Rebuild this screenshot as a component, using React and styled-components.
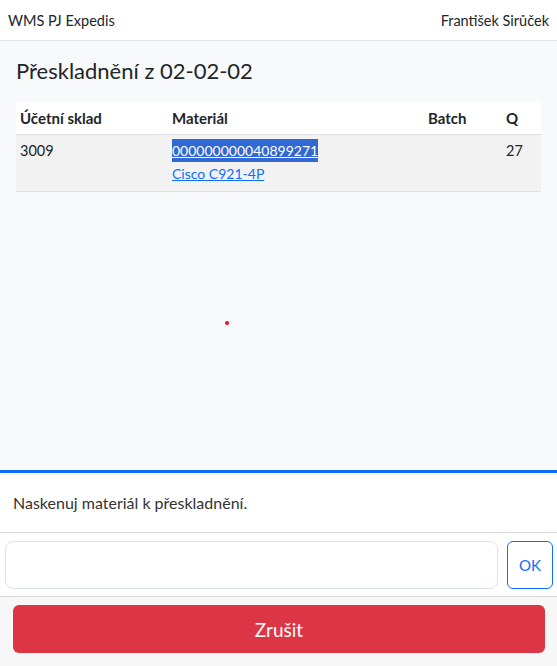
import React from "react";
import styled, { createGlobalStyle } from "styled-components";

const GlobalStyle = createGlobalStyle`
  html, body {
    margin: 0;
    padding: 0;
    height: 100%;
  }
  body {
    font-family: Lato, "Noto Sans", sans-serif;
    color: #212529;
    background: #f8f9fa;
  }
  #root {
    height: 100%;
  }
`;

const Page = styled.div`
  display: flex;
  flex-direction: column;
  height: 666px;
`;

const NavBar = styled.div`
  display: flex;
  justify-content: space-between;
  align-items: center;
  height: 40px;
  padding: 0 8px;
  background: #fff;
  border-bottom: 1px solid #dee2e6;
  font-size: 14.5px;
`;

const Content = styled.div`
  flex: 1;
  padding: 15px 16px 0;
  position: relative;
  background: #f8f9fa;
`;

const Title = styled.h1`
  margin: 0 0 16px;
  font-size: 22px;
  font-weight: 400;
  line-height: 30px;
`;

const Table = styled.table`
  width: 100%;
  table-layout: fixed;
  border-collapse: collapse;
`;

const Col = styled.col`
  width: ${(p) => p.$w};
`;

const HeadCell = styled.th`
  text-align: left;
  font-size: 15px;
  font-weight: 700;
  line-height: 22px;
  padding: 5px 4px;
  background: #fff;
  border-bottom: 1px solid #dee2e6;
`;

const Cell = styled.td`
  vertical-align: top;
  font-size: 14.5px;
  line-height: 23px;
  padding: 4px 4px 6px;
  background: #f2f2f2;
  border-bottom: 1px solid #dee2e6;
`;

const LinkText = styled.a`
  display: inline-block;
  font-size: 14px;
  color: ${(p) => (p.$selected ? "#fff" : "#0d6efd")};
  background: ${(p) => (p.$selected ? "#3168d4" : "transparent")};
  text-decoration: underline;
`;

const Dot = styled.span`
  position: absolute;
  left: 225px;
  top: 280px;
  width: 4px;
  height: 4px;
  border-radius: 50%;
  background: #e0102a;
`;

const Footer = styled.div`
  background: #f7f7f7;
  border-top: 3px solid #0d6efd;
`;

const Prompt = styled.div`
  background: #fff;
  padding: 0 13px;
  height: 59px;
  display: flex;
  align-items: center;
  font-size: 16px;
  color: #333;
  border-bottom: 1px solid #d6d6d6;
`;

const InputRow = styled.div`
  display: flex;
  gap: 9px;
  padding: 8px 4px 7px 5px;
  background: #fff;
  border-bottom: 1px solid #d6d6d6;
`;

const ScanInput = styled.input`
  flex: 1;
  height: 48px;
  box-sizing: border-box;
  border: 1px solid #dee2e6;
  border-radius: 8px;
  font-size: 16px;
  padding: 0 12px;
  outline: none;
`;

const OkButton = styled.button`
  width: 46px;
  height: 48px;
  box-sizing: border-box;
  border: 1px solid #0d6efd;
  border-radius: 6px;
  background: #fff;
  color: #0d6efd;
  font-family: inherit;
  font-size: 15px;
`;

const ButtonBar = styled.div`
  padding: 8px 12px 13px 13px;
`;

const CancelButton = styled.button`
  width: 100%;
  height: 48px;
  border: none;
  border-radius: 6px;
  background: #dc3545;
  color: #fff;
  font-family: inherit;
  font-size: 19px;
`;

export default function App() {
  return (
    <Page>
      <GlobalStyle />
      <NavBar>
        <span>WMS PJ Expedis</span>
        <span>František Sirůček</span>
      </NavBar>
      <Content>
        <Title>Přeskladnění z 02-02-02</Title>
        <Table>
          <colgroup>
            <Col $w="152px" />
            <Col $w="256px" />
            <Col $w="78px" />
            <Col $w="39px" />
          </colgroup>
          <thead>
            <tr>
              <HeadCell>Účetní sklad</HeadCell>
              <HeadCell>Materiál</HeadCell>
              <HeadCell>Batch</HeadCell>
              <HeadCell>Q</HeadCell>
            </tr>
          </thead>
          <tbody>
            <tr>
              <Cell>3009</Cell>
              <Cell>
                <LinkText $selected>000000000040899271</LinkText>
                <br />
                <LinkText>Cisco C921-4P</LinkText>
              </Cell>
              <Cell></Cell>
              <Cell>27</Cell>
            </tr>
          </tbody>
        </Table>
        <Dot />
      </Content>
      <Footer>
        <Prompt>Naskenuj materiál k přeskladnění.</Prompt>
        <InputRow>
          <ScanInput />
          <OkButton>OK</OkButton>
        </InputRow>
        <ButtonBar>
          <CancelButton>Zrušit</CancelButton>
        </ButtonBar>
      </Footer>
    </Page>
  );
}
